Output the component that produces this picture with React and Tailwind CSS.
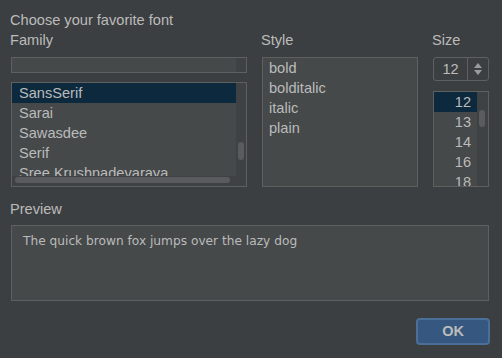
import React from 'react';

const families = ['SansSerif', 'Sarai', 'Sawasdee', 'Serif', 'Sree Krushnadevaraya'];
const styles = ['bold', 'bolditalic', 'italic', 'plain'];
const sizes = ['12', '13', '14', '16', '18'];

export default function App() {
  return (
    <div className="w-[502px] h-[358px] bg-[#3c3f41] text-[#bbbbbb] font-['Liberation_Sans',Arial,sans-serif] text-[14.6px] pl-[10px] pt-[10px] flex flex-col overflow-hidden">
      <div className="leading-[20px] h-[20px]">Choose your favorite font</div>

      <div className="flex h-[157px]">
        {/* Family */}
        <div className="w-[237px] flex flex-col">
          <div className="leading-[20px] h-[20px]">Family</div>
          <div className="mt-[7px] ml-[1px] w-[236px] h-[16px] border border-[#5e6060] bg-[#45494a] flex">
            <div className="flex-1" />
            <div className="w-[10px] bg-[#3f4244]" />
          </div>
          <div className="mt-[9px] ml-[1px] w-[236px] h-[105px] border border-[#5e6060] bg-[#45494a] flex">
            <div className="flex-1 flex flex-col min-w-0">
              <div className="flex-1 overflow-hidden">
                {families.map((f, i) => (
                  <div
                    key={f}
                    className={`h-[20px] leading-[20px] pl-[7px] whitespace-nowrap ${i === 0 ? 'bg-[#0d293e]' : ''}`}
                  >
                    {f}
                  </div>
                ))}
              </div>
              <div className="h-[10px] bg-[#3f4244] pt-[1px] pl-[3px] pr-[6px]">
                <div className="h-[6px] rounded-full bg-[#595b5d]" />
              </div>
            </div>
            <div className="w-[10px] bg-[#3f4244] pt-[59px] pl-[2px]">
              <div className="w-[6px] h-[18px] rounded-full bg-[#595b5d]" />
            </div>
          </div>
        </div>

        {/* Style */}
        <div className="ml-[14px] w-[157px] flex flex-col">
          <div className="leading-[20px] h-[20px]">Style</div>
          <div className="mt-[7px] ml-[1px] w-[156px] h-[130px] border border-[#5e6060] bg-[#45494a]">
            {styles.map((s) => (
              <div key={s} className="h-[20px] leading-[20px] pl-[6px]">
                {s}
              </div>
            ))}
          </div>
        </div>

        {/* Size */}
        <div className="ml-[14px] w-[58px] flex flex-col">
          <div className="leading-[20px] h-[20px]">Size</div>
          <div className="mt-[7px] ml-[1px] w-[56px] h-[24px] border border-[#5e6060] rounded-[3px] flex">
            <div className="w-[33px] flex items-center justify-center leading-none">12</div>
            <div className="flex-1 border-l border-[#5e6060] flex flex-col items-center justify-center gap-[2px]">
              <svg width="8" height="5" viewBox="0 0 8 5">
                <path d="M4 0 L8 5 L0 5 Z" fill="#9a9b9c" />
              </svg>
              <svg width="8" height="5" viewBox="0 0 8 5">
                <path d="M0 0 L8 0 L4 5 Z" fill="#9a9b9c" />
              </svg>
            </div>
          </div>
          <div className="mt-[10px] ml-[1px] w-[56px] h-[96px] border border-[#5e6060] bg-[#45494a] flex">
            <div className="flex-1 overflow-hidden">
              {sizes.map((s, i) => (
                <div
                  key={s}
                  className={`h-[20px] leading-[20px] text-right pr-[6px] ${i === 0 ? 'bg-[#0d293e]' : ''}`}
                >
                  {s}
                </div>
              ))}
            </div>
            <div className="w-[11px] bg-[#3f4244] pt-[18px] pl-[2px]">
              <div className="w-[6px] h-[17px] rounded-full bg-[#595b5d]" />
            </div>
          </div>
        </div>
      </div>

      <div className="mt-[12px] leading-[20px] h-[20px]">Preview</div>
      <div className="mt-[6px] ml-[1px] w-[478px] h-[76px] border border-[#5e6060] bg-[#45494a] pl-[11px] pt-[8px]">
        <div className="font-['DejaVu_Sans',sans-serif] text-[12.2px] leading-[15px]">
          The quick brown fox jumps over the lazy dog
        </div>
      </div>

      <div className="mt-[17px] ml-[406px] w-[74px] h-[27px] rounded-[4px] border-2 border-[#4a6f98] bg-[#365880] flex items-center justify-center font-bold text-[14.5px]">
        OK
      </div>
    </div>
  );
}
